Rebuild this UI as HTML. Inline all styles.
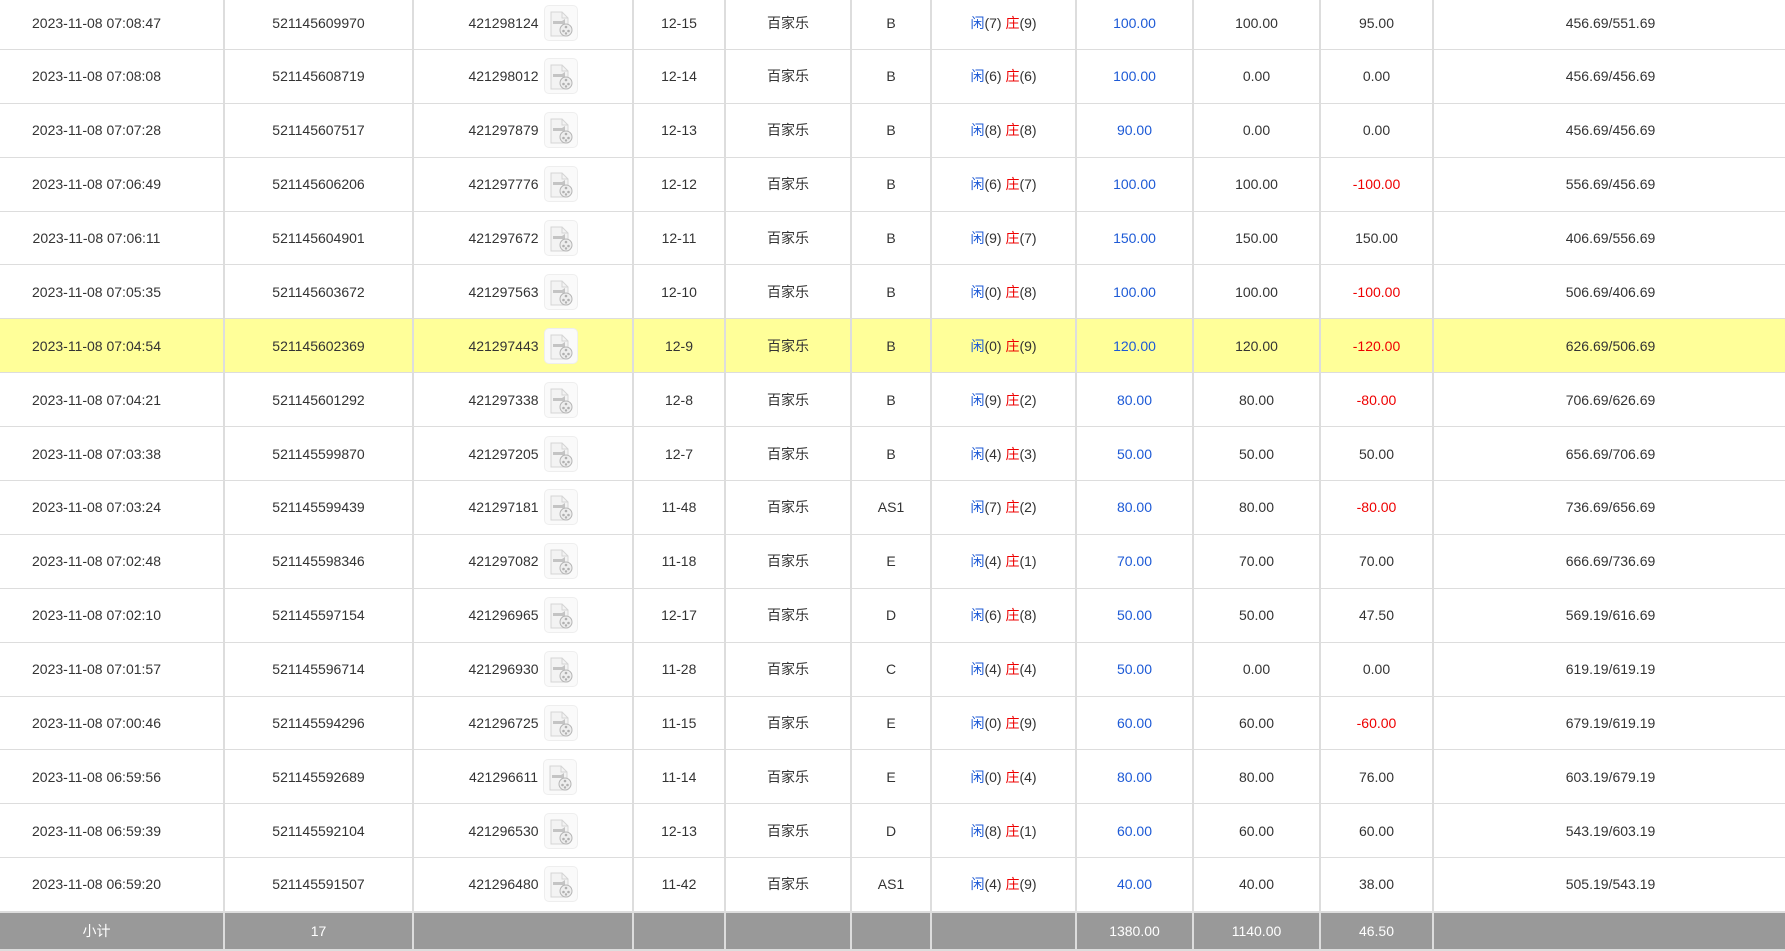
<!DOCTYPE html>
<html><head><meta charset="utf-8"><style>
html,body{margin:0;padding:0;background:#fff;width:1785px;height:948px;overflow:hidden}
table{border-collapse:collapse;table-layout:fixed;width:1789px;font-family:"Liberation Sans","Noto Sans CJK SC",sans-serif;font-size:14px;color:#333;position:absolute;top:-4px;left:-2px}
td{border:2px solid #ddd;text-align:center;padding:0;white-space:nowrap}
td:first-child{padding-right:30px}
tr.d td{border-left:2px solid #ddd;border-right:2px solid #ddd;border-top:1px solid #ddd;border-bottom:1px solid #ddd}
tr.hl td{background:#ffff99}
tr.f td{background:#999;color:#fff;height:36px;border-color:#ddd}
.b{color:#1d5ad6}.r{color:#e00}
.id{display:inline-flex;align-items:center}
.ic{display:inline-block;width:34px;height:36px;border:1px solid #eee;border-radius:5px;margin-left:5px;background:#fafafa;box-sizing:border-box}
.ic svg{display:block;margin:4px auto 0}
</style></head><body>
<table>
<colgroup><col style="width:225px"><col style="width:189px"><col style="width:220px"><col style="width:92px"><col style="width:126px"><col style="width:80px"><col style="width:145px"><col style="width:117px"><col style="width:127px"><col style="width:113px"><col style="width:355px"></colgroup>
<tbody id="tb"></tbody>
</table>
<script>
var icon='<span class="ic"><svg width="26" height="28" viewBox="0 0 26 28"><path d="M3 2h11l6 6v18H3z" fill="#f3f3f3" stroke="#d5d5d5"/><path d="M14 2v6h6" fill="none" stroke="#d5d5d5"/><path d="M5 11h9l3 -2v7l-3-2H5z" fill="#c4c4c4"/><circle cx="18" cy="20" r="6" fill="#eee" stroke="#b5b5b5"/><circle cx="18" cy="17" r="1.3" fill="#b0b0b0"/><circle cx="15.5" cy="21" r="1.3" fill="#b0b0b0"/><circle cx="20.5" cy="21" r="1.3" fill="#b0b0b0"/><circle cx="18" cy="23.5" r="1.2" fill="#b0b0b0"/></svg></span>';
var rows=[
["2023-11-08 07:08:47","521145609970","421298124","12-15","B",7,9,"100.00","100.00","95.00","456.69/551.69"],
["2023-11-08 07:08:08","521145608719","421298012","12-14","B",6,6,"100.00","0.00","0.00","456.69/456.69"],
["2023-11-08 07:07:28","521145607517","421297879","12-13","B",8,8,"90.00","0.00","0.00","456.69/456.69"],
["2023-11-08 07:06:49","521145606206","421297776","12-12","B",6,7,"100.00","100.00","-100.00","556.69/456.69"],
["2023-11-08 07:06:11","521145604901","421297672","12-11","B",9,7,"150.00","150.00","150.00","406.69/556.69"],
["2023-11-08 07:05:35","521145603672","421297563","12-10","B",0,8,"100.00","100.00","-100.00","506.69/406.69"],
["2023-11-08 07:04:54","521145602369","421297443","12-9","B",0,9,"120.00","120.00","-120.00","626.69/506.69"],
["2023-11-08 07:04:21","521145601292","421297338","12-8","B",9,2,"80.00","80.00","-80.00","706.69/626.69"],
["2023-11-08 07:03:38","521145599870","421297205","12-7","B",4,3,"50.00","50.00","50.00","656.69/706.69"],
["2023-11-08 07:03:24","521145599439","421297181","11-48","AS1",7,2,"80.00","80.00","-80.00","736.69/656.69"],
["2023-11-08 07:02:48","521145598346","421297082","11-18","E",4,1,"70.00","70.00","70.00","666.69/736.69"],
["2023-11-08 07:02:10","521145597154","421296965","12-17","D",6,8,"50.00","50.00","47.50","569.19/616.69"],
["2023-11-08 07:01:57","521145596714","421296930","11-28","C",4,4,"50.00","0.00","0.00","619.19/619.19"],
["2023-11-08 07:00:46","521145594296","421296725","11-15","E",0,9,"60.00","60.00","-60.00","679.19/619.19"],
["2023-11-08 06:59:56","521145592689","421296611","11-14","E",0,4,"80.00","80.00","76.00","603.19/679.19"],
["2023-11-08 06:59:39","521145592104","421296530","12-13","D",8,1,"60.00","60.00","60.00","543.19/603.19"],
["2023-11-08 06:59:20","521145591507","421296480","11-42","AS1",4,9,"40.00","40.00","38.00","505.19/543.19"]];
var h='';
rows.forEach(function(r,i){
var ht=i==0?'52.9':'53.9';
h+='<tr class="d'+(i==6?' hl':'')+'" style="height:'+ht+'px">';
h+='<td>'+r[0]+'</td><td>'+r[1]+'</td><td><span class="id">'+r[2]+icon+'</span></td><td>'+r[3]+'</td><td>百家乐</td><td>'+r[4]+'</td>';
h+='<td><span class="b">闲</span>('+r[5]+') <span class="r">庄</span>('+r[6]+')</td>';
h+='<td class="b">'+r[7]+'</td><td>'+r[8]+'</td><td'+(r[9][0]=='-'?' class="r"':'')+'>'+r[9]+'</td><td>'+r[10]+'</td></tr>';
});
h+='<tr class="f"><td>小计</td><td>17</td><td></td><td></td><td></td><td></td><td></td><td>1380.00</td><td>1140.00</td><td>46.50</td><td></td></tr>';
document.getElementById('tb').innerHTML=h;
</script>
</body></html>
